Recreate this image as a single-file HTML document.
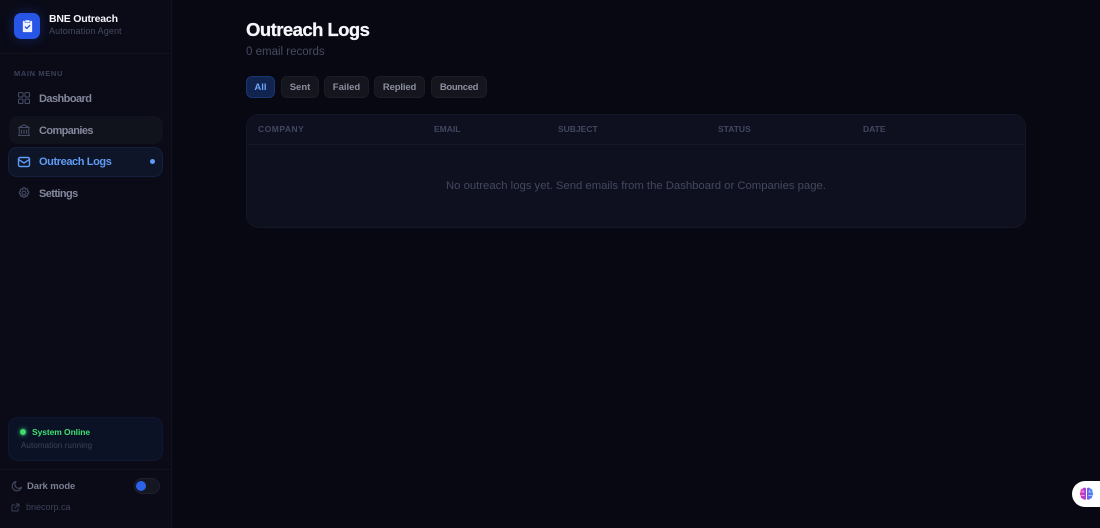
<!DOCTYPE html>
<html><head><meta charset="utf-8"><style>
*{box-sizing:border-box;margin:0;padding:0}
html,body{width:1100px;height:528px;overflow:hidden;background:#080812}
body{position:relative;font-family:"Liberation Sans",sans-serif}
.a{position:absolute}
.t{position:absolute;white-space:nowrap;line-height:1;font-family:"Liberation Sans",sans-serif}
svg{position:absolute;fill:none;stroke-linecap:round;stroke-linejoin:round}
.b{position:absolute;top:76px;height:22px;border-radius:6px;background:#14151d;border:1px solid #1b1c25;color:#8b8e9e;font:bold 9.5px/22px "Liberation Sans",sans-serif;text-align:center}
.h{position:absolute;top:125px;color:#424760;font:bold 8.5px/9px "Liberation Sans",sans-serif;white-space:nowrap}
.n{font-size:11px;font-weight:bold;color:#83879b}
</style></head><body>
<div class="a" style="left:0;top:0;width:172px;height:528px;background:#0a0b17;border-right:1px solid #12131d"></div>
<div class="a" style="left:0;top:53px;width:171px;height:1px;background:#10121c"></div>
<div class="a" style="left:14px;top:13px;width:26px;height:26px;border-radius:7px;background:#2755e6;box-shadow:0 0 12px rgba(37,80,220,.35)"></div>
<svg style="left:21px;top:19px" width="13" height="14" viewBox="0 0 13 14"><path d="M3.500 2.500H2.500v10h8v-10H9.500" fill="#eef2ff" stroke="#eef2ff" stroke-width="1.300"/><rect x="4" y="1" width="5" height="2.500" rx=".6" fill="#eef2ff" stroke="#2755e6" stroke-width=".6"/><path d="M4.300 8l1.500 1.500 2.900-3" stroke="#2755e6" stroke-width="1.300"/></svg>
<div class="t" style="left:49px;top:14px;font-size:10.500px;font-weight:bold;color:#f4f5fa;letter-spacing:-.2px">BNE Outreach</div>
<div class="t" style="left:49px;top:26.500px;font-size:9px;color:#444a63;letter-spacing:.1px">Automation Agent</div>
<div class="t" style="left:14px;top:70px;font-size:7.500px;font-weight:bold;color:#3b415a;letter-spacing:.63px">MAIN MENU</div>

<svg style="left:17px;top:91px" width="14" height="14" viewBox="0 0 14 14" stroke="#454b63" stroke-width="1.100"><rect x="1.500" y="1.500" width="4.500" height="4.500" rx="1"/><rect x="8" y="1.500" width="4.500" height="4.500" rx="1"/><rect x="1.500" y="8" width="4.500" height="4.500" rx="1"/><rect x="8" y="8" width="4.500" height="4.500" rx="1"/></svg>
<div class="t n" style="left:39px;top:93.500px;letter-spacing:-.56px">Dashboard</div>

<div class="a" style="left:9px;top:116px;width:154px;height:28px;border-radius:9px;background:#10121c"></div>
<svg style="left:17px;top:123px" width="14" height="14" viewBox="0 0 14 14" stroke="#454b63" stroke-width="1.100"><path d="M1.500 12.500h11M2.200 12.500V4.500h9.600v8M1.800 4.500L7 1.800l5.200 2.700M4.500 7v3.500M7 7v3.500M9.500 7v3.500"/></svg>
<div class="t n" style="left:39px;top:125.500px;letter-spacing:-.6px">Companies</div>

<div class="a" style="left:8px;top:147px;width:155px;height:30px;border-radius:9px;background:#0e1528;border:1px solid #14203f"></div>
<svg style="left:17px;top:154.500px" width="14" height="14" viewBox="0 0 14 14" stroke="#5f9cf5" stroke-width="1.400"><rect x="1.500" y="2.500" width="11" height="9" rx="1.500"/><path d="M1.500 4.500L7 8l5.500-3.500"/></svg>
<div class="t n" style="left:39px;top:157px;color:#5f9cf5;letter-spacing:-.4px">Outreach Logs</div>
<div class="a" style="left:149.500px;top:159px;width:5px;height:5px;border-radius:50%;background:#5f9cf5"></div>

<svg style="left:17px;top:186px" width="14" height="14" viewBox="0 0 14 14" stroke="#454b63" stroke-width="1.100"><circle cx="7" cy="7" r="1.900"/><path d="M7 1.700l1 .2.400 1.300 1.300-.5 1.200 1.100-.5 1.300 1.300.5v1.800l-1.300.5.500 1.300-1.200 1.100-1.300-.5-.4 1.300H6l-.4-1.300-1.300.5-1.200-1.100.5-1.300-1.300-.5V5.900l1.300-.5-.5-1.300 1.200-1.100 1.300.5L6 1.900z"/></svg>
<div class="t n" style="left:39px;top:188.500px;letter-spacing:-.6px">Settings</div>

<div class="a" style="left:8px;top:417px;width:155px;height:44px;border-radius:10px;background:#0b1226;border:1px solid #101831"></div>
<div class="a" style="left:20px;top:429px;width:6px;height:6px;border-radius:50%;background:#3ddc6e;box-shadow:0 0 4px #3ddc6e"></div>
<div class="t" style="left:32px;top:428px;font-size:8.500px;font-weight:bold;color:#3fe070;letter-spacing:-.08px">System Online</div>
<div class="t" style="left:21px;top:442px;font-size:8px;color:#3c4259;letter-spacing:.1px">Automation running</div>

<div class="a" style="left:0;top:469px;width:171px;height:1px;background:#10121c"></div>
<svg style="left:11px;top:479.500px" width="12" height="12" viewBox="0 0 12 12" stroke="#454b63" stroke-width="1.100"><path d="M10.500 7.200A4.700 4.700 0 1 1 5 1.500a3.800 3.800 0 0 0 5.500 5.700z"/></svg>
<div class="t" style="left:27px;top:482px;font-size:9.500px;font-weight:bold;color:#7b7f93;letter-spacing:-.1px">Dark mode</div>
<div class="a" style="left:134px;top:478px;width:26px;height:16px;border-radius:8px;background:#141622;border:1px solid #1d2030"></div>
<div class="a" style="left:136px;top:481px;width:10px;height:10px;border-radius:50%;background:#2c62e8"></div>
<svg style="left:11px;top:502.500px" width="9" height="9" viewBox="0 0 9 9" stroke="#3c4259" stroke-width=".9"><path d="M7 5.500V8H1V2h2.500M5 1h3v3M8 1L4 5"/></svg>
<div class="t" style="left:26px;top:503px;font-size:9px;color:#3c4259">bnecorp.ca</div>

<div class="t" style="left:246px;top:21px;font-size:18.500px;font-weight:bold;color:#f5f6fb;letter-spacing:-.55px;-webkit-text-stroke:.25px #f5f6fb">Outreach Logs</div>
<div class="t" style="left:246px;top:46.500px;font-size:11.500px;color:#454b63">0 email records</div>

<div class="b" style="left:246px;width:29px;background:#10244f;border-color:#1a3570;color:#6ea5f7">All</div>
<div class="b" style="left:281px;width:38px">Sent</div>
<div class="b" style="left:324px;width:45px">Failed</div>
<div class="b" style="left:374px;width:51px;letter-spacing:-.15px">Replied</div>
<div class="b" style="left:431px;width:56px;letter-spacing:-.35px">Bounced</div>

<div class="a" style="left:246px;top:114px;width:780px;height:114px;border-radius:13px;background:#0e101f;border:1px solid #141726"></div>
<div class="a" style="left:247px;top:144px;width:778px;height:1px;background:#141726"></div>
<div class="h" style="left:258px;letter-spacing:.5px">COMPANY</div>
<div class="h" style="left:434px">EMAIL</div>
<div class="h" style="left:558px">SUBJECT</div>
<div class="h" style="left:718px">STATUS</div>
<div class="h" style="left:863px">DATE</div>
<div class="t" style="left:446px;top:180.500px;font-size:11.300px;color:#43485f">No outreach logs yet. Send emails from the Dashboard or Companies page.</div>

<div class="a" style="left:1072px;top:481px;width:40px;height:26px;border-radius:13px;background:#fff"></div>
<svg style="left:1079px;top:487px" width="15" height="14" viewBox="0 0 15 14" stroke="none"><defs><linearGradient id="g" x1="0" x2="1" y1="0" y2="0"><stop offset="0" stop-color="#f0309a"/><stop offset=".5" stop-color="#8a4be8"/><stop offset="1" stop-color="#2f9cf5"/></linearGradient></defs><path fill="url(#g)" d="M7 1.200C5.800.2 4 .5 3.500 1.800 2 2 1.200 3.400 1.700 4.700.5 5.800.6 7.800 1.800 8.700c-.4 1.500.7 3 2.200 3 .7 1.200 2.200 1.300 3 .4zM8 1.200C9.200.2 11 .5 11.500 1.800c1.500.2 2.300 1.600 1.800 2.900 1.200 1.100 1.100 3.100-.1 4 .4 1.500-.7 3-2.200 3-.7 1.200-2.200 1.300-3 .4z"/><path d="M2.500 5h2.500M2.500 8.500h3M4 3v2M12 5h-2.500M12.500 8.500h-3M10.500 3v2" stroke="#fff" stroke-width=".7" opacity=".7"/></svg>
</body></html>
